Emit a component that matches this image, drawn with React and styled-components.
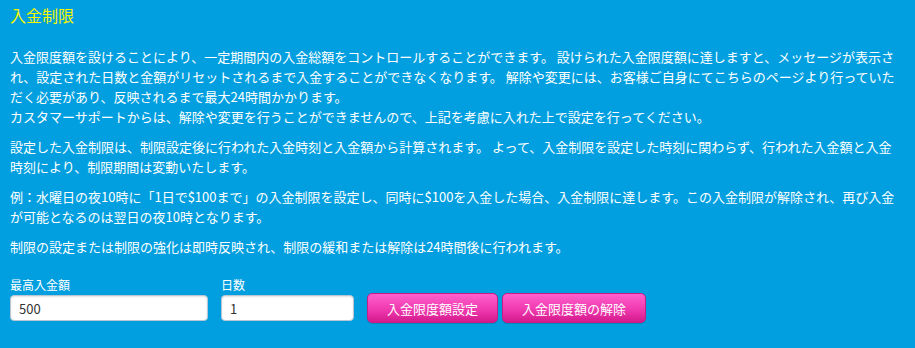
import styled, { createGlobalStyle } from "styled-components";

const GlobalStyle = createGlobalStyle`
	html, body {
		margin: 0;
		padding: 0;
		background: #029fe0;
	}
	body {
		font-family: "Noto Sans CJK JP", "Noto Sans", sans-serif;
	}
`;

function App() {
	return (
		<Page>
			<GlobalStyle />
			<Title>入金制限</Title>
			<Text>
				入金限度額を設けることにより、一定期間内の入金総額をコントロールすることができます。 設けられた入金限度額に達しますと、メッセージが表示され、設定された日数と金額がリセットされるまで入金することができなくなります。 解除や変更には、お客様ご自身にてこちらのページより行っていただく必要があり、反映されるまで最大24時間かかります。
				<br />
				カスタマーサポートからは、解除や変更を行うことができませんので、上記を考慮に入れた上で設定を行ってください。
			</Text>
			<Text>
				設定した入金制限は、制限設定後に行われた入金時刻と入金額から計算されます。 よって、入金制限を設定した時刻に関わらず、行われた入金額と入金時刻により、制限期間は変動いたします。
			</Text>
			<Text>
				例：水曜日の夜10時に「1日で$100まで」の入金制限を設定し、同時に$100を入金した場合、入金制限に達します。この入金制限が解除され、再び入金が可能となるのは翌日の夜10時となります。
			</Text>
			<Text>制限の設定または制限の強化は即時反映され、制限の緩和または解除は24時間後に行われます。</Text>
			<Form>
				<Field>
					<Label>最高入金額</Label>
					<Input $width={198} defaultValue="500" />
				</Field>
				<Field>
					<Label>日数</Label>
					<Input $width={133} defaultValue="1" />
				</Field>
				<Buttons>
					<PinkButton $width={131}>入金限度額設定</PinkButton>
					<PinkButton $width={144}>入金限度額の解除</PinkButton>
				</Buttons>
			</Form>
		</Page>
	);
}

const Page = styled.div`
	padding: 5px 10px 20px;
	color: #ffffff;
`;

const Title = styled.h1`
	margin: 0 0 22px;
	font-size: 16px;
	line-height: 20px;
	font-weight: normal;
	color: #f4f400;
`;

const Text = styled.p`
	margin: 0 9px 10px 0;
	font-size: 13px;
	line-height: 20px;
`;

const Form = styled.div`
	display: flex;
	align-items: flex-end;
	margin-top: 20px;
`;

const Field = styled.div`
	display: flex;
	flex-direction: column;
	margin-right: 13px;
	padding-bottom: 2px;
`;

const Label = styled.label`
	font-size: 12px;
	line-height: 16px;
	margin-bottom: 2px;
`;

const Input = styled.input`
	box-sizing: border-box;
	width: ${(p) => p.$width}px;
	height: 26px;
	padding: 0 8px;
	border: 1px solid #b9c6d3;
	border-radius: 4px;
	background: #ffffff;
	box-shadow: inset 0 1px 2px rgba(0, 0, 0, 0.12);
	font-family: "Noto Sans CJK JP", "Noto Sans", sans-serif;
	font-size: 13px;
	color: #333333;
	outline: none;
`;

const Buttons = styled.div`
	display: flex;
	gap: 4px;
`;

const PinkButton = styled.button`
	box-sizing: border-box;
	width: ${(p) => p.$width}px;
	height: 30px;
	padding: 0;
	border: 1px solid #c81b86;
	border-radius: 5px;
	background: linear-gradient(to bottom, #ff5fcc 0%, #ef3aaf 55%, #d41a8c 100%);
	box-shadow: 0 1px 1px rgba(0, 0, 0, 0.15);
	color: #ffffff;
	font-family: "Noto Sans CJK JP", "Noto Sans", sans-serif;
	font-size: 13px;
	cursor: pointer;
`;

export default App;
